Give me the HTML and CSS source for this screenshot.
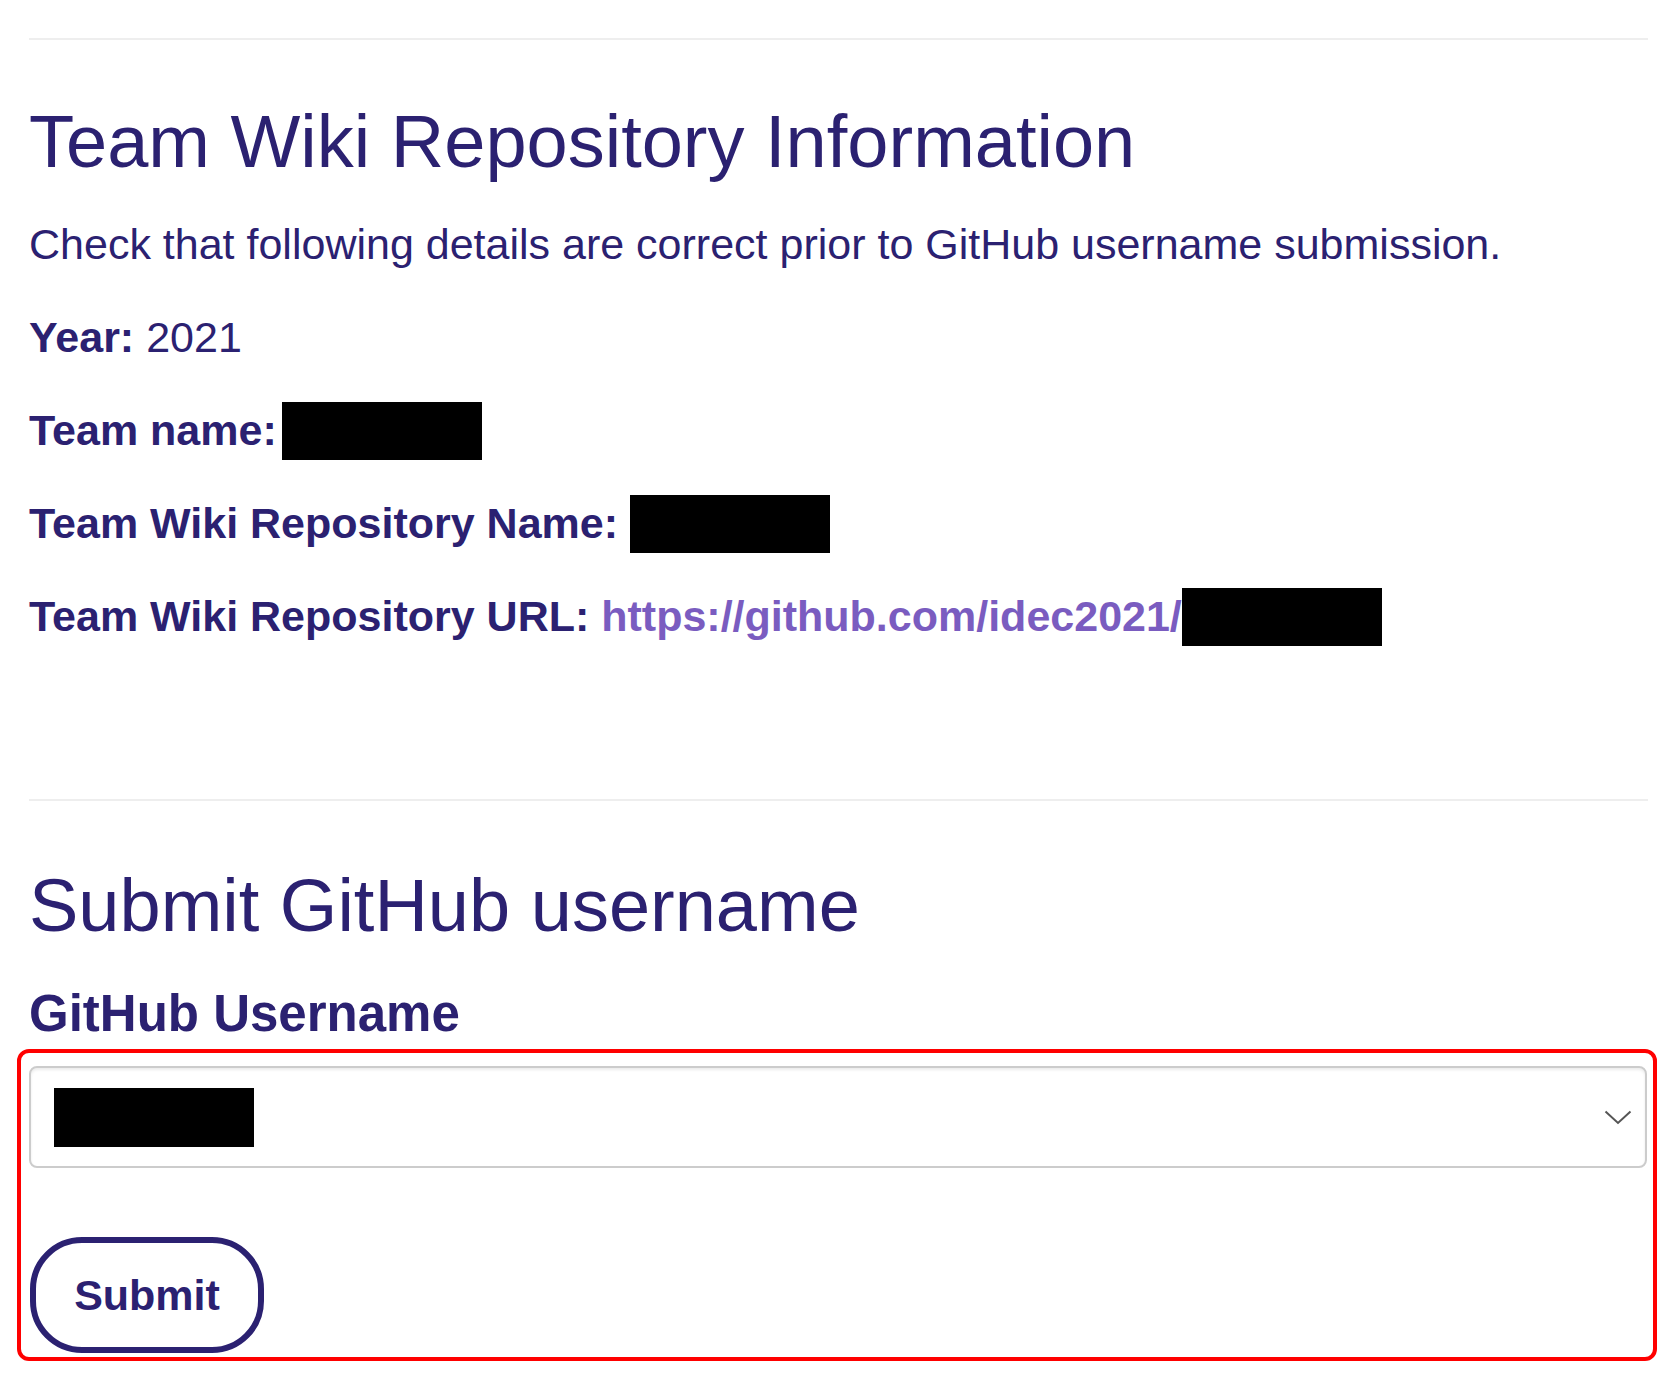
FILE: index.html
```html
<!DOCTYPE html>
<html lang="en">
<head>
<meta charset="utf-8">
<title>Team Wiki Repository Information</title>
<link rel="stylesheet" href="styles.css">
</head>
<body>
<main class="page">
  <hr class="rule rule-top">
  <section class="info">
    <h1 class="title">Team Wiki Repository Information</h1>
    <p class="lead">Check that following details are correct prior to GitHub username submission.</p>
    <p class="row"><b>Year:</b> 2021</p>
    <p class="row"><b>Team name:</b><span class="redact redact-a"></span></p>
    <p class="row"><b>Team Wiki Repository Name:</b> <span class="redact"></span></p>
    <p class="row"><b>Team Wiki Repository URL:</b> <a class="link" href="#">https://github.com/idec2021/</a><span class="redact"></span></p>
  </section>
  <hr class="rule rule-mid">
  <section class="submit">
    <h2 class="title title-sub">Submit GitHub username</h2>
    <label class="label" for="gh">GitHub Username</label>
    <form class="form">
      <div class="select" id="gh" role="combobox" tabindex="0">
        <span class="redact redact-sel"></span>
        <svg class="chev" width="28" height="15" viewBox="0 0 28 15" aria-hidden="true"><path d="M1.5 1.5 L14 13 L26.5 1.5" fill="none" stroke="#555" stroke-width="2"/></svg>
      </div>
      <button class="btn" type="button">Submit</button>
    </form>
  </section>
</main>
</body>
</html>
```

FILE: styles.css
```css
html, body {
  margin: 0;
  padding: 0;
  background: #fff;
}
body {
  font-family: "Liberation Sans", Arial, sans-serif;
  color: #2b2171;
}
.page {
  padding: 0 19px 0 29px;
}
.rule {
  border: 0;
  height: 2px;
  background: #eeeeee;
  margin: 0;
}
.rule-top {
  margin-top: 38px;
}
.title {
  font-size: 74px;
  line-height: 88px;
  font-weight: 400;
  margin: 58px 0 0;
}
.title-sub {
  margin-top: 61px;
}
.lead {
  font-size: 43px;
  line-height: 52px;
  margin: 32px 0 0;
}
.row {
  font-size: 43px;
  line-height: 52px;
  margin: 41px 0 0;
}
.row b {
  font-weight: 700;
}
.link {
  color: #7a5cc0;
  font-weight: 700;
  text-decoration: none;
}
.redact {
  display: inline-block;
  width: 200px;
  height: 58px;
  background: #000;
  vertical-align: -11px;
  margin: -4px 0;
}
.redact-a {
  margin-left: 5px;
}
.rule-mid {
  margin-top: 157px;
}
.label {
  display: block;
  font-size: 51px;
  line-height: 60px;
  font-weight: 700;
  margin-top: 34px;
}
.form {
  margin: 5px -9px 0 -12px;
  padding: 13px 6px 4px 8px;
  border: 4px solid #ff0000;
  border-radius: 12px;
}
.select {
  height: 98px;
  border: 2px solid #cccccc;
  border-radius: 8px;
  box-shadow: inset 0 2px 3px rgba(0,0,0,0.08);
  display: flex;
  align-items: center;
  justify-content: space-between;
  padding: 0 13px 0 23px;
}
.redact-sel {
  height: 59px;
  margin: 0;
  vertical-align: baseline;
}
.chev {
  display: block;
}
.btn {
  display: block;
  margin-top: 69px;
  margin-left: 1px;
  width: 234px;
  height: 116px;
  border: 6px solid #2b2171;
  border-radius: 52px;
  background: #fff;
  color: #2b2171;
  font-family: "Liberation Sans", Arial, sans-serif;
  font-size: 43px;
  font-weight: 700;
  padding: 0;
}
```
